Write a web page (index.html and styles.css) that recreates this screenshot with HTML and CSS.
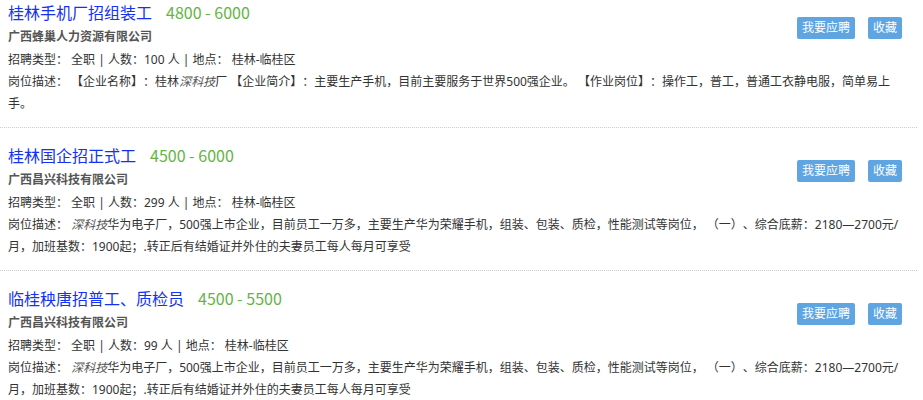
FILE: index.html
```html
<!DOCTYPE html>
<html lang="zh-CN">
    <head>
        <meta charset="UTF-8">
        <title>招聘信息</title>
        <link rel="stylesheet" href="styles.css">
    </head>
    <body>
    <ul class="job-list">
        <li class="job-item">
            <div class="ops">
                <a class="btn" href="#">我要应聘</a>
                <a class="btn" href="#">收藏</a>
            </div>
            <h3 class="title"><a href="#">桂林手机厂招组装工</a><span class="salary">4800 - 6000</span></h3>
            <p class="company">广西蜂巢人力资源有限公司</p>
            <p class="meta">招聘类型： 全职 | 人数：100 人 | 地点： 桂林-临桂区</p>
            <p class="desc">岗位描述： 【企业名称】：桂林<em>深科技</em>厂 【企业简介】：主要生产手机，目前主要服务于世界500强企业。 【作业岗位】：操作工，普工，普通工衣静电服，简单易上手。</p>
        </li>
        <li class="job-item">
            <div class="ops">
                <a class="btn" href="#">我要应聘</a>
                <a class="btn" href="#">收藏</a>
            </div>
            <h3 class="title"><a href="#">桂林国企招正式工</a><span class="salary">4500 - 6000</span></h3>
            <p class="company">广西昌兴科技有限公司</p>
            <p class="meta">招聘类型： 全职 | 人数：299 人 | 地点： 桂林-临桂区</p>
            <p class="desc">岗位描述： <em>深科技</em>华为电子厂，500强上市企业，目前员工一万多，主要生产华为荣耀手机，组装、包装、质检，性能测试等岗位， （一）、综合底薪：2180—2700元/月，加班基数：1900起；.转正后有结婚证并外住的夫妻员工每人每月可享受</p>
        </li>
        <li class="job-item">
            <div class="ops">
                <a class="btn" href="#">我要应聘</a>
                <a class="btn" href="#">收藏</a>
            </div>
            <h3 class="title"><a href="#">临桂秧唐招普工、质检员</a><span class="salary">4500 - 5500</span></h3>
            <p class="company">广西昌兴科技有限公司</p>
            <p class="meta">招聘类型： 全职 | 人数：99 人 | 地点： 桂林-临桂区</p>
            <p class="desc">岗位描述： <em>深科技</em>华为电子厂，500强上市企业，目前员工一万多，主要生产华为荣耀手机，组装、包装、质检，性能测试等岗位， （一）、综合底薪：2180—2700元/月，加班基数：1900起；.转正后有结婚证并外住的夫妻员工每人每月可享受</p>
        </li>
    </ul>
    </body>
</html>
```

FILE: styles.css
```css
*{
    margin:0;
    padding:0;
}
body{
    font-family: "Noto Sans", "Noto Sans CJK SC", sans-serif;
    font-size: 12px;
    color: #333;
    background: #fff;
    text-spacing-trim: space-all;
}
li{
    list-style:none;
}
a{
    text-decoration: none;
}
.job-list{
    width: 917px;
    margin-top: -15px;
}
.job-item{
    padding: 15px 15px 12px 8px;
    border-bottom: 1px dotted #ccc;
}
.job-item .ops{
    float: right;
    margin-top: 17px;
    display: flex;
    gap: 13px;
}
.job-item .btn{
    display: block;
    height: 22px;
    line-height: 22px;
    padding: 0 5px;
    background: #5ea5e2;
    color: #fff;
    border-radius: 2px;
}
.job-item .title{
    font-size: 16px;
    font-weight: normal;
    line-height: 24px;
}
.job-item .title a{
    color: #1432f5;
}
.job-item .salary{
    margin-left: 14px;
    font-family: "Noto Sans CJK SC", sans-serif;
    color: #64b445;
}
.job-item .company{
    font-weight: bold;
    color: #555;
    line-height: 23px;
}
.job-item .meta{
    line-height: 23px;
}
.job-item .desc{
    line-height: 22px;
}
.job-item .desc em{
    color: #555;
}
```
